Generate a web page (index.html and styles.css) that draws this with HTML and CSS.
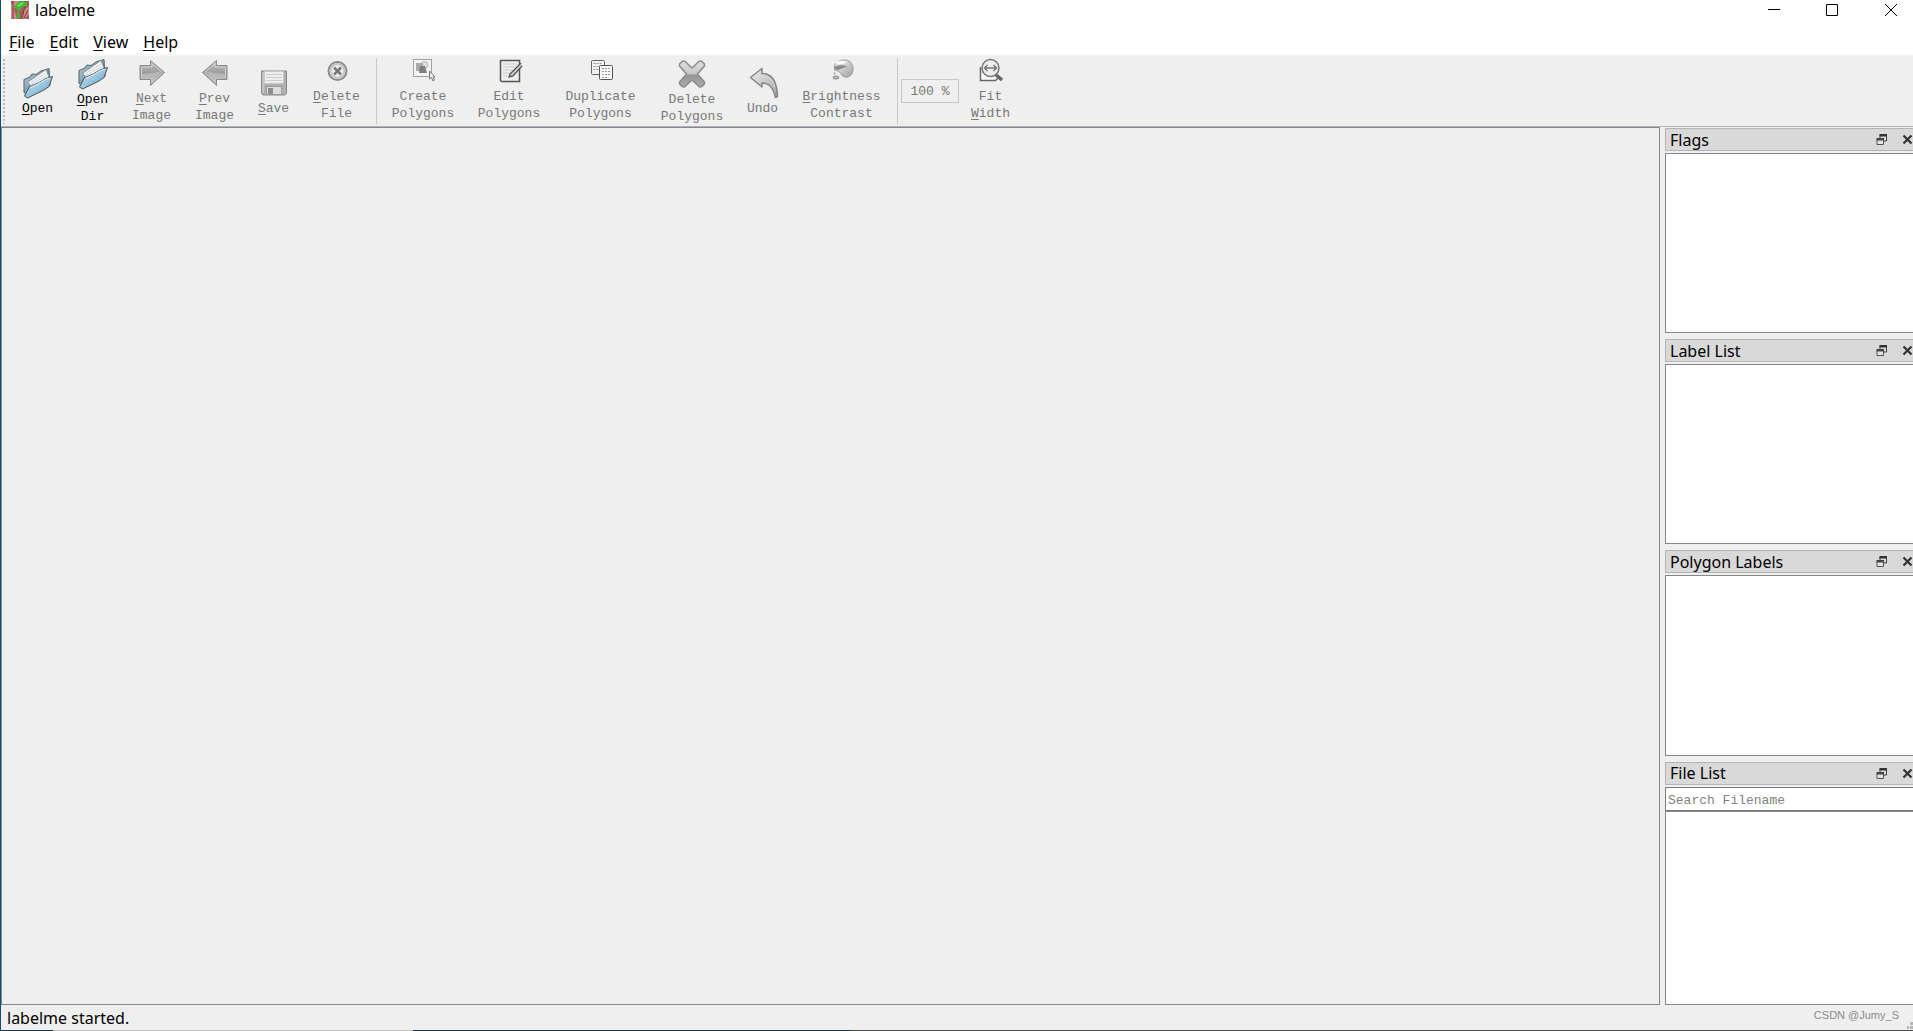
FILE: index.html
```html
<!DOCTYPE html>
<html lang="en">
<head>
<meta charset="utf-8">
<title>labelme</title>
<link rel="stylesheet" href="styles.css">
</head>
<body>
<svg class="defs" width="0" height="0" aria-hidden="true">
  <defs>
    <linearGradient id="blue" x1="0" y1="0" x2="1" y2="1"><stop offset="0" stop-color="#c9e3f2"/><stop offset=".5" stop-color="#9cc6dd"/><stop offset="1" stop-color="#5f9dbd"/></linearGradient>
    <linearGradient id="steel" x1="0" y1="0" x2="1" y2="1"><stop offset="0" stop-color="#bcd6e2"/><stop offset="1" stop-color="#4b6674"/></linearGradient>
    <linearGradient id="grey" x1="0" y1="0" x2="0" y2="1"><stop offset="0" stop-color="#c2c2c2"/><stop offset=".5" stop-color="#9c9c9c"/><stop offset="1" stop-color="#bababa"/></linearGradient>
    <linearGradient id="pale" x1="0" y1="0" x2="1" y2="1"><stop offset="0" stop-color="#f0f0f0"/><stop offset="1" stop-color="#a2a2a2"/></linearGradient>
    <linearGradient id="cross" x1="0" y1="0" x2="0" y2="1"><stop offset="0" stop-color="#dedede"/><stop offset=".48" stop-color="#c8c8c8"/><stop offset=".54" stop-color="#969696"/><stop offset="1" stop-color="#aaaaaa"/></linearGradient>
    <symbol id="folder" viewBox="0 0 32 32">
      <path d="M2 12.500l6-2.500 2-3 4 .500 5-3.500 8-2.500 1 17-22 10-4-3z" fill="url(#steel)" stroke="#53636b"/>
      <path d="M6 15l18-12.500 3 8-17 12z" fill="#fdfdfd" stroke="#8b9499"/>
      <path d="M8 16l16-10M8 18l17-9.500" stroke="#c7cbd0" fill="none"/>
      <path d="M7.500 19.500c6-2.500 8-3 12-5.500 3-2 5-3 11-4.500l-3.500 10-5 3.500-16.500 8-3-2z" fill="url(#blue)" stroke="#41545f" stroke-linejoin="round"/>
      <path d="M8.500 20.500c8-3 12-7 19-9.500" stroke="#e5f3fa" fill="none"/>
    </symbol>
    <symbol id="arrow" viewBox="0 0 32 30">
      <path d="M4 6.500h10.500v-5L28.500 13.500l-14 13v-6H4z" fill="url(#grey)" stroke="#8a8a8a"/>
      <path d="M5.500 8h10.500V4.500L26.500 13.500 16 23v-4H5.500z" fill="none" stroke="#d2d2d2"/>
      <path d="M6 15q9 0 20-3l-9 9v-2H6z" fill="#b9b9b9"/>
    </symbol>
    <symbol id="float" viewBox="0 0 11 11">
      <path d="M4 4V1h6.500v6H8" fill="none" stroke="#444"/><path d="M3.500 0H11v2.500H3.500z" fill="#333"/>
      <path d="M1 5.500h6.500v5H1z" fill="#e2e2e2" stroke="#555"/><path d="M.500 4H8v2.500H.500z" fill="#444"/>
    </symbol>
    <symbol id="close" viewBox="0 0 11 11"><path d="M1.500 1.500l8 8M9.500 1.500l-8 8" stroke="#333" stroke-width="2.200"/></symbol>
  </defs>
</svg>
<div class="window">
  <header class="titlebar">
    <svg class="logo" viewBox="0 0 18 18" aria-hidden="true">
      <path d="M0 0h18v18H0z" fill="#a8595b"/><path d="M0 3l4-3h4l-5 8 3 10H0zM13 9l5-4v8l-4 5h-3z" fill="#d08a86"/><path d="M2 0v18M15 0l-4 18M17 9l-4 8" stroke="#7a3742" fill="none"/>
      <path d="M2 7l4-5 5-2 5 1v4l-5 1-3 5 1 6H5l2-8-2-2z" fill="#45b935"/><path d="M7 5l5-3" stroke="#7ee05d" stroke-width="2"/>
    </svg>
    <span class="caption">labelme</span>
    <button class="sys" aria-label="Minimize"><svg width="12" height="12"><path d="M0 5.500h12" stroke="#000"/></svg></button>
    <button class="sys" aria-label="Maximize"><svg width="12" height="12"><path d="M.500 .500h11v11H.500z" fill="none" stroke="#000"/></svg></button>
    <button class="sys sys-close" aria-label="Close"><svg width="12" height="12"><path d="M0 0l12 12M12 0L0 12" stroke="#000"/></svg></button>
  </header>
  <nav class="menubar">
    <button><u>F</u>ile</button><button><u>E</u>dit</button><button><u>V</u>iew</button><button><u>H</u>elp</button>
  </nav>
  <div class="toolbar" role="toolbar">
    <span class="grip"></span>
    <button class="tool c4"><svg class="big"><use href="#folder"/></svg><span><u>O</u>pen</span></button>
    <button class="tool c4"><svg class="big"><use href="#folder"/></svg><span><u>O</u>pen<br>Dir</span></button>
    <button class="tool c5" disabled><svg class="mid"><use href="#arrow"/></svg><span><u>N</u>ext<br>Image</span></button>
    <button class="tool c5" disabled><svg class="mid flip"><use href="#arrow"/></svg><span><u>P</u>rev<br>Image</span></button>
    <button class="tool c4" disabled><svg class="big" viewBox="0 0 32 32">
      <path d="M3.500 4h25v22.500l-1.500 1.500H5l-1.500-1.500z" fill="#b0b0b0" stroke="#888"/><path d="M6.500 4.500h19v12h-19z" fill="#eee" stroke="#c8c8c8"/><path d="M8 7.500h16M8 10.500h16M8 13.500h16" stroke="#ccc"/><path d="M8.500 19.500h15v8h-15z" fill="#ddd" stroke="#999"/><path d="M10 21h5v6h-5z" fill="#8e8e8e"/><path d="M5 26V5" stroke="#d5d5d5"/>
    </svg><span><u>S</u>ave</span></button>
    <button class="tool c6 raised" disabled><svg class="mid" viewBox="0 0 32 30">
      <circle cx="16.500" cy="14" r="9" fill="#eee" stroke="#8a8a8a" stroke-width="2"/><circle cx="16.500" cy="14" r="7" fill="none" stroke="#c4c4c4" stroke-width="2"/><path d="M13 10.500l7 7M20 10.500l-7 7" stroke="#777" stroke-width="2.500"/>
    </svg><span><u>D</u>elete<br>File</span></button>
    <span class="rule"></span>
    <button class="tool c8 raised" disabled><svg class="mid" viewBox="0 0 32 30">
      <path d="M6.500 2.500h18v17h-18z" fill="#f4f4f4" stroke="#555" stroke-dasharray="1 1"/><circle cx="17.500" cy="8" r="3.500" fill="#ddd" stroke="#bbb"/><path d="M9 6h7v8H9z" fill="#aaa"/><path d="M13 9h5l2 7h-8z" fill="#808080"/><path d="M22.500 14v8l2-1.500 1.500 3.500 1.500-1-1.500-3h2z" fill="#eee" stroke="#777"/>
    </svg><span>Create<br>Polygons</span></button>
    <button class="tool c8 raised" disabled><svg class="mid" viewBox="0 0 32 30">
      <path d="M7.500 3.500h19v21H8.500l-1-1z" fill="#efefef" stroke="#555" stroke-width="1.500"/><path d="M10 7h14M10 10h14M10 13h10M10 16h7M10 19h5" stroke="#ccc"/><path d="M28 6L17 17l-1 3 4-1L29 9" fill="#ccc" stroke="#555" stroke-width="1.300"/>
    </svg><span>Edit<br>Polygons</span></button>
    <button class="tool c9 raised" disabled><svg class="mid" viewBox="0 0 32 30">
      <rect x="6.500" y="3.500" width="13" height="14" rx="1" fill="#f2f2f2" stroke="#666"/><path d="M8.500 6.500h9M8.500 9.500h9M8.500 12.500h9" stroke="#999" stroke-dasharray="2 1"/><rect x="14.500" y="8.500" width="13" height="14" rx="1" fill="#f8f8f8" stroke="#555"/><path d="M17 11.500h9M17 14.500h9M17 17.500h9M17 20.500h6" stroke="#999" stroke-dasharray="2 1"/>
    </svg><span>Duplicate<br>Polygons</span></button>
    <button class="tool c8" disabled><svg class="big" viewBox="0 0 32 32">
      <path d="M8.500 3l7.500 7 7.500-7 2.500.500 2.500 2.500v2l-7 8 7 8v2L26 28.500l-2.500.500-7.500-7-7.500 7-2.500-.500L3.500 26v-2l7-8-7-8V6L6 3.500z" fill="url(#cross)" stroke="#8c8c8c" stroke-linejoin="round" stroke-width="1.500"/>
    </svg><span>Delete<br>Polygons</span></button>
    <button class="tool c4" disabled><svg class="big" viewBox="0 0 32 32">
      <path d="M3.500 10.500L15 1.500v5c9 0 15 6 15.500 23l-2 1C26 20 22 16 15 16v4z" fill="url(#pale)" stroke="#858585" stroke-width="1.500" stroke-linejoin="round"/><path d="M15.500 9c6 0 10 4 12 11" fill="none" stroke="#ddd"/>
    </svg><span>Undo</span></button>
    <button class="tool c10 raised" disabled><svg class="mid" viewBox="0 0 32 30">
      <path d="M8.500 11c-1-5 5-8.500 11-8 6 .500 8 6 7.500 10s-3 8-8 7c-5-1-3-6-10.500-7z" fill="url(#pale)" stroke="#999"/><path d="M8 10.500q5-4 13-1l-8 3q-4 1-5-2z" fill="#888"/><path d="M10 5q6-3 11 0-3 3-11 2z" fill="#f8f8f8"/><ellipse cx="10" cy="20.500" rx="3" ry="1.500" fill="#bbb" stroke="#888"/><circle cx="8.500" cy="16.500" r="1" fill="#999"/>
    </svg><span><u>B</u>rightness<br>Contrast</span></button>
    <span class="rule"></span>
    <input class="zoom" type="text" value="100 %" aria-label="Zoom level" disabled>
    <button class="tool c5 raised" disabled><svg class="mid" viewBox="0 0 32 30">
      <path d="M5.500 10v13.500h15l4-4" fill="#fff" stroke="#666" stroke-width="1.500"/><path d="M20 17l7 6" stroke="#666" stroke-width="3.500"/><circle cx="15.500" cy="11" r="8.500" fill="#eee" stroke="#777" stroke-width="1.500"/><path d="M10 11h11M12.500 8l-3 3 3 3M18.500 8l3 3-3 3" fill="none" stroke="#777" stroke-width="1.500"/>
    </svg><span>Fit<br><u>W</u>idth</span></button>
  </div>
  <main class="workspace">
    <section class="canvas" aria-label="Canvas"></section>
    <aside class="docks">
      <section class="dock">
        <header><h2>Flags</h2><button aria-label="Float"><svg><use href="#float"/></svg></button><button aria-label="Close"><svg><use href="#close"/></svg></button></header>
        <div class="list"></div>
      </section>
      <section class="dock">
        <header><h2>Label List</h2><button aria-label="Float"><svg><use href="#float"/></svg></button><button aria-label="Close"><svg><use href="#close"/></svg></button></header>
        <div class="list"></div>
      </section>
      <section class="dock">
        <header><h2>Polygon Labels</h2><button aria-label="Float"><svg><use href="#float"/></svg></button><button aria-label="Close"><svg><use href="#close"/></svg></button></header>
        <div class="list"></div>
      </section>
      <section class="dock dock-files">
        <header><h2>File List</h2><button aria-label="Float"><svg><use href="#float"/></svg></button><button aria-label="Close"><svg><use href="#close"/></svg></button></header>
        <input class="search" type="text" placeholder="Search Filename" aria-label="Search Filename">
        <div class="list"></div>
      </section>
    </aside>
  </main>
  <footer class="statusbar">
    <span>labelme started.</span>
    <small>CSDN @Jumy_S</small>
    <svg class="sizegrip" width="6" height="8" aria-hidden="true"><path d="M3 0h3v3H3zM0 4h2v3H0zM3 4h3v3H3z" fill="#b4b4b4"/></svg>
  </footer>
  <div class="edge"></div>
</div>
</body>
</html>
```
FILE: styles.css
```css
* { box-sizing: border-box; }
body { margin: 0; background: #efefef; color: #000; font: 16px/22px "Noto Sans", "Open Sans", sans-serif; }
button { margin: 0; padding: 0; border: 0; background: none; color: inherit; font: inherit; }
svg { display: block; flex: none; }
u { text-underline-offset: 2px; text-decoration-thickness: 1px; text-decoration-skip-ink: none; }
.defs { position: absolute; }
.window { display: flex; flex-direction: column; height: 100vh; border-left: 1px solid #14506e; overflow: hidden; }

.titlebar { display: flex; align-items: center; height: 20px; padding-left: 10px; background: #fff; }
.logo { width: 18px; height: 18px; }
.caption { flex: 1; padding-left: 6px; }
.sys { display: flex; justify-content: center; align-items: center; width: 58px; height: 20px; }
.sys-close { width: 52px; padding-left: 24px; justify-content: flex-start; }

.menubar { display: flex; gap: 15px; height: 36px; padding: 11px 8px 0; background: #fff; border-bottom: 2px solid #f6f6f6; }
.menubar button { height: 22px; }

.toolbar { display: flex; align-items: stretch; height: 71px; border-bottom: 1px solid #b2b2b4; font: 13px/17px "Liberation Mono", monospace; }
.grip { width: 2px; margin: 1px 5px 2px 2px; background: repeating-linear-gradient(#efefef 0 2px, #b9b9b9 2px 4px); }
.tool { display: flex; flex-direction: column; align-items: center; justify-content: center; flex: none; text-align: center; }
.tool span { margin: 1px 0 -1px; }
.tool:disabled { color: #787878; }
.raised { padding-bottom: 4px; }
.c4 { width: 55px; }
.c5 { width: 63px; }
.c6 { width: 71px; }
.c8 { width: 86px; }
.c9 { width: 97px; }
.c10 { width: 103px; }
.big { width: 32px; height: 32px; }
.mid { width: 32px; height: 30px; }
.flip { transform: scaleX(-1); }
.rule { width: 1px; margin: 2px 3px 2px 4px; background: #cacaca; }
.zoom { align-self: center; width: 58px; height: 24px; padding: 1px 0 0; border: 1px solid #c8c8c8; border-radius: 0; background: #efefef; color: #787878; font: inherit; text-align: center; }

.workspace { display: flex; gap: 5px; flex: 1; min-height: 0; }
.canvas { flex: 1; border: 1px solid #828790; }
.docks { display: flex; flex-direction: column; gap: 6px; width: 248px; padding-top: 1px; }
.dock { display: flex; flex-direction: column; flex: 205 1 0; }
.dock-files { flex-grow: 243; }
.dock header { display: flex; align-items: center; gap: 15px; height: 23px; margin-bottom: 2px; padding-left: 4px; border: 1px solid #b4b4b4; border-right: 0; background: #d9d9d9; }
.dock h2 { flex: 1; margin: 0; font: inherit; }
.dock header svg { width: 11px; height: 11px; }
.list { flex: 1; border: 1px solid #828790; border-right: 0; background: #fff; }
.search { width: 100%; height: 24px; padding: 3px 2px 0; border: 1px solid #7a7a7a; border-right: 0; border-radius: 0; background: #fff; font: 13px/17px "Liberation Mono", monospace; }
.search::placeholder { color: #828282; opacity: 1; }

.statusbar { display: flex; align-items: center; height: 25px; padding-left: 6px; }
.statusbar span { flex: 1; }
.statusbar small { padding: 0 8px 6px 0; color: #8c8c8c; font: 11px/14px "Liberation Sans", Arial, sans-serif; }
.sizegrip { align-self: flex-end; }
.edge { height: 1px; background: linear-gradient(90deg, #1a3a4a 52px, #c0c0c0 52px 412px, #1a3a4a 412px 850px, #4a4a4c 850px); }
```
